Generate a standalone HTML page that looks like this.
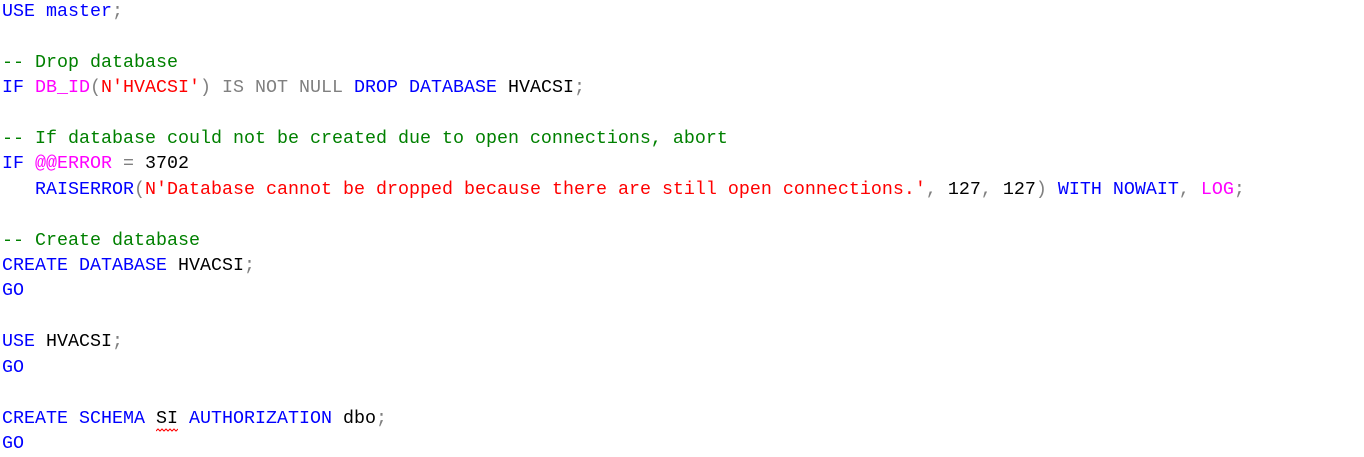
<!DOCTYPE html>
<html><head><meta charset="utf-8"><style>
html,body{margin:0;padding:0;background:#fff;width:1364px;height:457px;overflow:hidden}
pre{margin:0;position:absolute;left:2px;top:-1px;font-family:"Liberation Mono",monospace;font-size:18.33px;line-height:25.4px;color:#000}
.k{color:#0000ff}.c{color:#008000}.g{color:#808080}.m{color:#ff00ff}.s{color:#ff0000}
.sq{position:relative}
.sq svg{position:absolute;left:0;bottom:-3px}
</style></head><body><pre><span class="k">USE</span> <span class="k">master</span><span class="g">;</span>

<span class="c">-- Drop database</span>
<span class="k">IF</span> <span class="m">DB_ID</span><span class="g">(</span><span class="s">N'HVACSI'</span><span class="g">)</span> <span class="g">IS NOT NULL</span> <span class="k">DROP DATABASE</span> HVACSI<span class="g">;</span>

<span class="c">-- If database could not be created due to open connections, abort</span>
<span class="k">IF</span> <span class="m">@@ERROR</span> <span class="g">=</span> 3702
   <span class="k">RAISERROR</span><span class="g">(</span><span class="s">N'Database cannot be dropped because there are still open connections.'</span><span class="g">,</span> 127<span class="g">,</span> 127<span class="g">)</span> <span class="k">WITH</span> <span class="k">NOWAIT</span><span class="g">,</span> <span class="m">LOG</span><span class="g">;</span>

<span class="c">-- Create database</span>
<span class="k">CREATE DATABASE</span> HVACSI<span class="g">;</span>
<span class="k">GO</span>

<span class="k">USE</span> HVACSI<span class="g">;</span>
<span class="k">GO</span>

<span class="k">CREATE SCHEMA</span> <span class="sq">SI<svg width="22" height="4" viewBox="0 0 22 4"><path d="M0 3 L2 1 L4 3 L6 1 L8 3 L10 1 L12 3 L14 1 L16 3 L18 1 L20 3 L22 1" fill="none" stroke="#ff0000" stroke-width="1"/></svg></span> <span class="k">AUTHORIZATION</span> dbo<span class="g">;</span>
<span class="k">GO</span></pre></body></html>
